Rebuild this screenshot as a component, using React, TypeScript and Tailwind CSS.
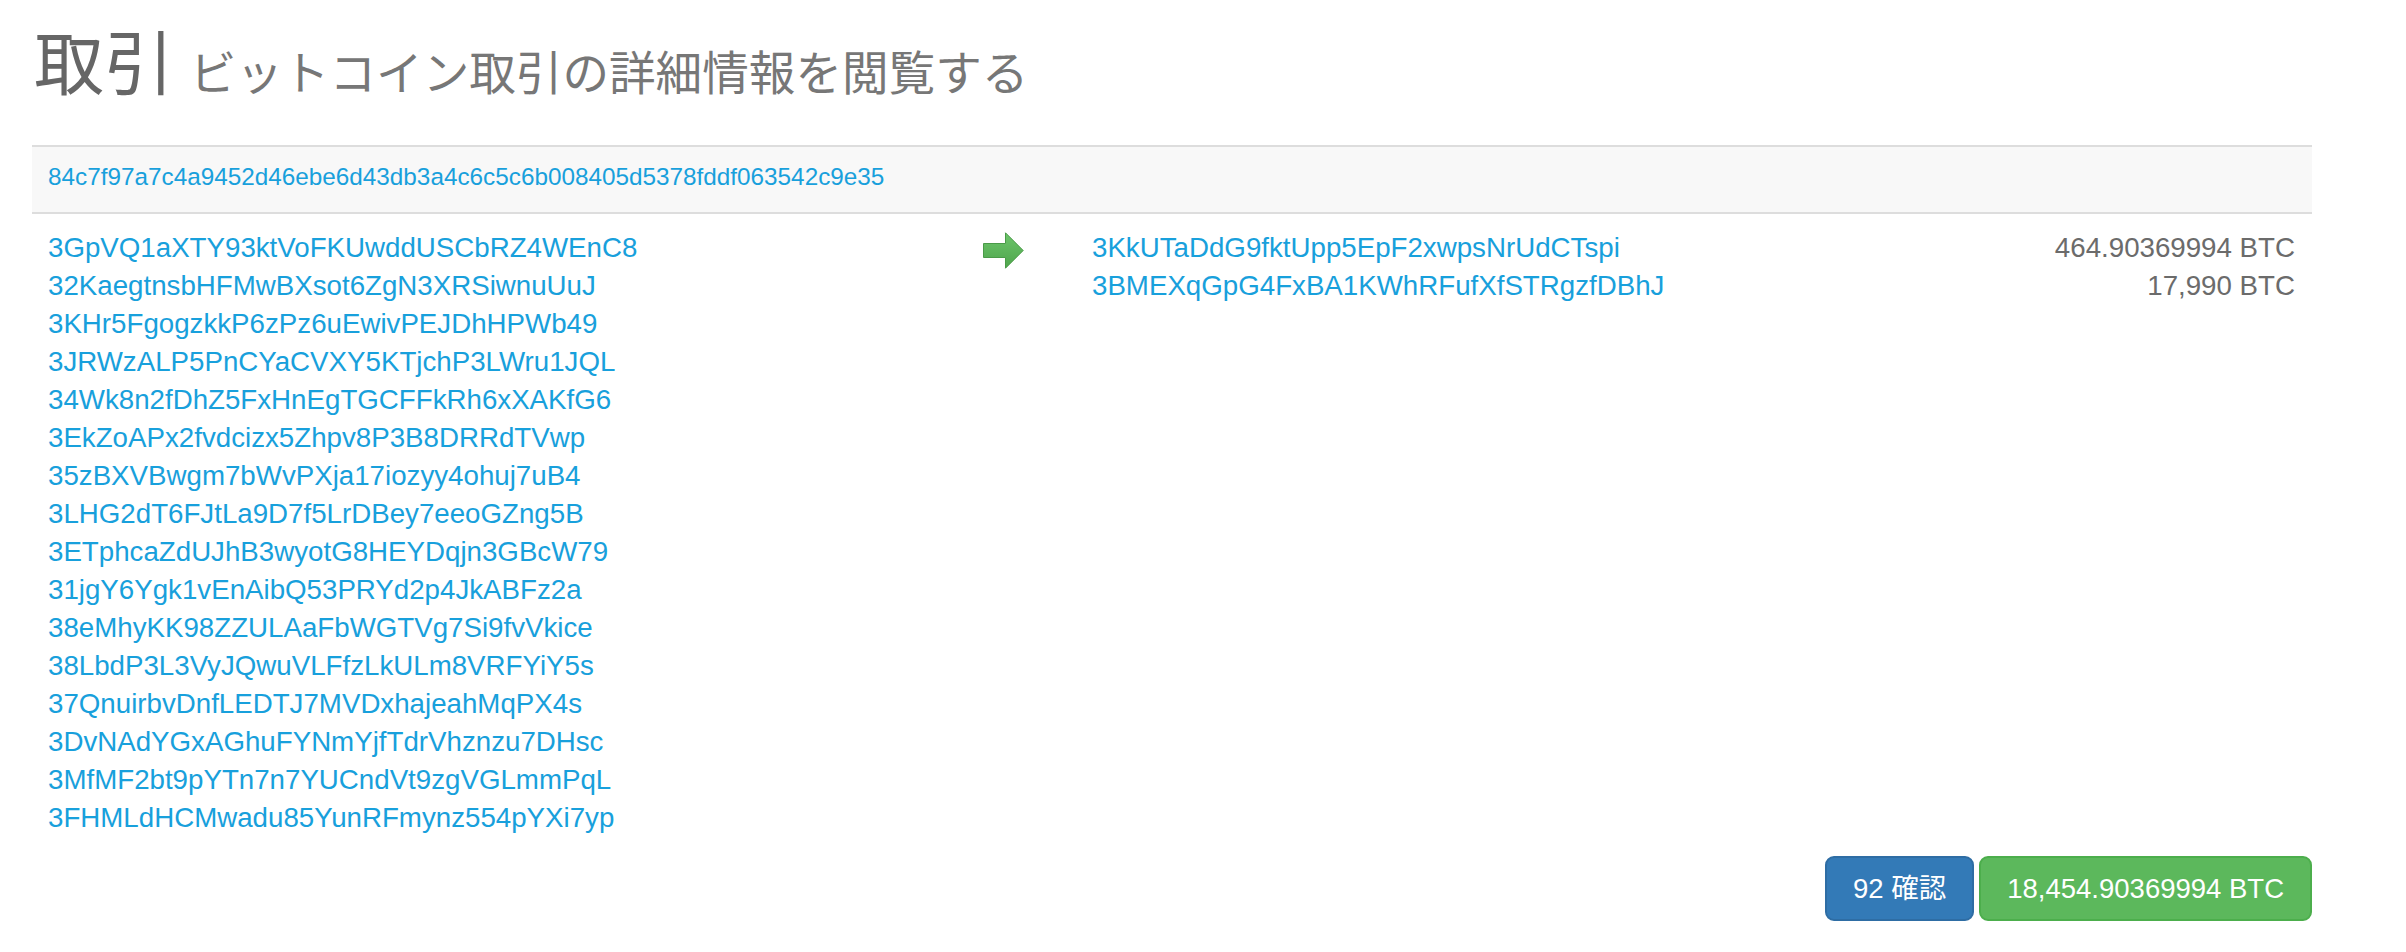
import React from "react";

const inputs = [
  "3GpVQ1aXTY93ktVoFKUwddUSCbRZ4WEnC8",
  "32KaegtnsbHFMwBXsot6ZgN3XRSiwnuUuJ",
  "3KHr5FgogzkkP6zPz6uEwivPEJDhHPWb49",
  "3JRWzALP5PnCYaCVXY5KTjchP3LWru1JQL",
  "34Wk8n2fDhZ5FxHnEgTGCFFkRh6xXAKfG6",
  "3EkZoAPx2fvdcizx5Zhpv8P3B8DRRdTVwp",
  "35zBXVBwgm7bWvPXja17iozyy4ohuj7uB4",
  "3LHG2dT6FJtLa9D7f5LrDBey7eeoGZng5B",
  "3ETphcaZdUJhB3wyotG8HEYDqjn3GBcW79",
  "31jgY6Ygk1vEnAibQ53PRYd2p4JkABFz2a",
  "38eMhyKK98ZZULAaFbWGTVg7Si9fvVkice",
  "38LbdP3L3VyJQwuVLFfzLkULm8VRFYiY5s",
  "37QnuirbvDnfLEDTJ7MVDxhajeahMqPX4s",
  "3DvNAdYGxAGhuFYNmYjfTdrVhznzu7DHsc",
  "3MfMF2bt9pYTn7n7YUCndVt9zgVGLmmPqL",
  "3FHMLdHCMwadu85YunRFmynz554pYXi7yp",
];

const outputs = [
  { addr: "3KkUTaDdG9fktUpp5EpF2xwpsNrUdCTspi", amount: "464.90369994 BTC" },
  { addr: "3BMEXqGpG4FxBA1KWhRFufXfSTRgzfDBhJ", amount: "17,990 BTC" },
];

function Arrow() {
  return (
    <svg width="41" height="37" viewBox="0 0 41 37">
      <defs>
        <linearGradient id="ag" x1="0" y1="0" x2="0" y2="1">
          <stop offset="0" stopColor="#6cc56a" />
          <stop offset="1" stopColor="#4fa54d" />
        </linearGradient>
      </defs>
      <path
        d="M0.5 11.5 H22.5 V0.8 L40.2 18.5 L22.5 36.2 V25.5 H0.5 Z"
        fill="url(#ag)"
        stroke="#4a9a48"
        strokeWidth="1"
        strokeLinejoin="miter"
      />
    </svg>
  );
}

export default function App() {
  return (
    <div className="w-[2406px] h-[952px] bg-white overflow-hidden">
      <div className="ml-[32px] w-[2280px] font-['Liberation_Sans','Noto_Sans_CJK_JP',sans-serif]">
        <h1 className="pt-[25px] pl-[2px] h-[145px] text-[70px] leading-[70px] font-normal text-[#666666] font-['Noto_Sans_CJK_JP','Liberation_Sans',sans-serif]">
          取引{" "}
          <small className="text-[46.6px] text-[#777777]">ビットコイン取引の詳細情報を閲覧する</small>
        </h1>
        <div className="h-[69px] border-y-2 border-[#dddddd] bg-[#f8f8f8] flex items-center pl-[16px] pb-[4px]">
          <a className="text-[24.3px] text-[#18a0dc]">
            84c7f97a7c4a9452d46ebe6d43db3a4c6c5c6b008405d5378fddf063542c9e35
          </a>
        </div>
        <div className="flex pt-[15px] text-[27.7px] leading-[38px]">
          <div className="w-[951px] pl-[16px] flex flex-col">
            {inputs.map((a) => (
              <a key={a} className="text-[#18a0dc]">
                {a}
              </a>
            ))}
          </div>
          <div className="w-[41px] pt-[3px]">
            <Arrow />
          </div>
          <div className="flex-1 pl-[68px] pr-[17px] flex flex-col">
            {outputs.map((o) => (
              <div key={o.addr} className="flex justify-between">
                <a className="text-[#18a0dc]">{o.addr}</a>
                <span className="text-[#6b6b6b]">{o.amount}</span>
              </div>
            ))}
          </div>
        </div>
        <div className="flex justify-end gap-[5px] mt-[19px]">
          <span className="h-[65px] px-[26px] flex items-center rounded-[9px] bg-[#337ab7] border-2 border-[#2e6da4] text-white text-[27.5px]">
            92 確認
          </span>
          <span className="h-[65px] px-[26px] flex items-center rounded-[9px] bg-[#5cb85c] border-2 border-[#4cae4c] text-white text-[27.5px]">
            18,454.90369994 BTC
          </span>
        </div>
      </div>
    </div>
  );
}
